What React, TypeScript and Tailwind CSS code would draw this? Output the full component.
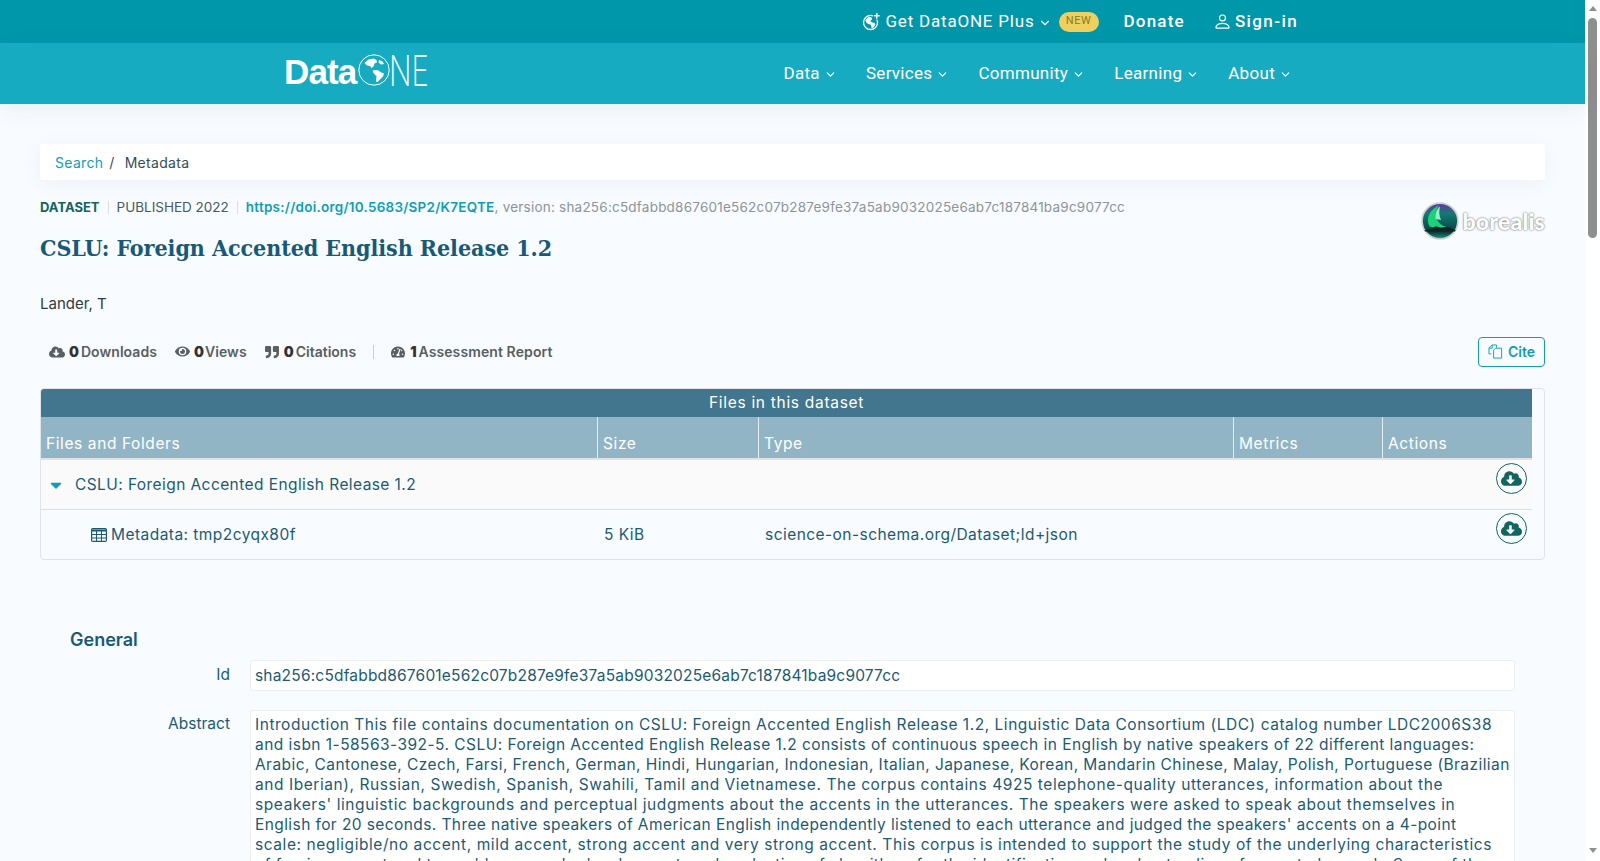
import { ChevronDown } from "lucide-react";
import { BsPerson } from "react-icons/bs";
import { FaCaretDown, FaCloudDownloadAlt, FaEye, FaQuoteRight, FaTachometerAlt } from "react-icons/fa";

const body = "font-['Inter','Liberation_Sans',sans-serif]";
const plex = "font-['Roboto','Liberation_Sans',sans-serif]";

const navItems = ["Data", "Services", "Community", "Learning", "About"];

const abstractLines = [
  { text: "Introduction This file contains documentation on CSLU: Foreign Accented English Release 1.2, Linguistic Data Consortium (LDC) catalog number LDC2006S38", cls: "tracking-[0.53px]" },
  { text: "and isbn 1-58563-392-5. CSLU: Foreign Accented English Release 1.2 consists of continuous speech in English by native speakers of 22 different languages:", cls: "tracking-[0.46px]" },
  { text: "Arabic, Cantonese, Czech, Farsi, French, German, Hindi, Hungarian, Indonesian, Italian, Japanese, Korean, Mandarin Chinese, Malay, Polish, Portuguese (Brazilian", cls: "tracking-[0.43px]" },
  { text: "and Iberian), Russian, Swedish, Spanish, Swahili, Tamil and Vietnamese. The corpus contains 4925 telephone-quality utterances, information about the", cls: "tracking-[0.56px]" },
  { text: "speakers' linguistic backgrounds and perceptual judgments about the accents in the utterances. The speakers were asked to speak about themselves in", cls: "tracking-[0.59px]" },
  { text: "English for 20 seconds. Three native speakers of American English independently listened to each utterance and judged the speakers' accents on a 4-point", cls: "tracking-[0.41px]" },
  { text: "scale: negligible/no accent, mild accent, strong accent and very strong accent. This corpus is intended to support the study of the underlying characteristics", cls: "tracking-[0.57px]" },
  { text: "of foreign accent and to enable research, development, and evaluation of algorithms for the identification and understanding of accented speech. Some of the", cls: "tracking-[0.47px]" },
];

const GlobePlus = () => (
  <svg viewBox="0 0 20 20" className="w-[19px] h-[19px]">
    <circle cx="9" cy="11" r="7.4" fill="none" stroke="#fff" strokeWidth="1.4" />
    <path d="M3.5 8.5L7 5l3 .5.5 2.5-2 1.5 2.5 1.5 2.5.5.5 2-2.5 3.5-1.5-.5-.5-3-3-1-2-1.5z" fill="#fff" />
    <rect x="11.5" y="0" width="8" height="8" fill="#0097aa" />
    <path d="M15.5 1v6M12.5 4h6" stroke="#fff" strokeWidth="1.6" />
  </svg>
);

const LogoGlobe = () => (
  <svg viewBox="0 0 32 32" className="w-[32px] h-[32px] shrink-0">
    <circle cx="16" cy="16" r="15.2" fill="none" stroke="#fff" strokeWidth="1" />
    <path d="M6.5 9l4-3.5 5-1 3 1.5.5 2.5-2.5 1-1 3-2 1.5-1.5-2-3-.5z" fill="#fff" />
    <path d="M14.5 16.5l5-.5 4 2.5 2.5 1-1 3-3 3-2.5 2.5-1.5-.5.5-5-3-3.5z" fill="#fff" />
    <path d="M21 6l3.5 1.5 1.5 2.5-3 .5-2.5-2z" fill="#fff" />
  </svg>
);

const BorealisMark = () => (
  <svg viewBox="0 0 36 36" className="w-[38px] h-[38px] shrink-0">
    <defs>
      <linearGradient id="sky" x1="0" y1="0" x2="0" y2="1">
        <stop offset="0" stopColor="#6a35a8" />
        <stop offset="0.3" stopColor="#127a70" />
        <stop offset="0.72" stopColor="#0c4a4c" />
        <stop offset="0.8" stopColor="#10302f" />
        <stop offset="1" stopColor="#0aa393" />
      </linearGradient>
    </defs>
    <circle cx="18" cy="18" r="17" fill="url(#sky)" stroke="#cfcfcf" strokeWidth="1.6" />
    <path d="M8 23C4 15 9 7 17 3c-3 5-5 10-1 15 2 3 5 5 9 6-6 1-13 1-17-1z" fill="#1fcf7c" />
    <path d="M14 16c-1-5 1-9 4-12-1 5-1 9 1 13z" fill="#8ff5c4" />
    <path d="M3 27l7-2 4-2 5 1.500 6-1 8 3-1 1.500H4z" fill="#0f2528" />
  </svg>
);

const CiteIcon = () => (
  <svg viewBox="0 0 16 16" className="w-[15px] h-[15px]" fill="none" stroke="#0e9fb5" strokeWidth="1">
    <path d="M3.500 10.500H1V4.500L4.500 1H9v3" />
    <path d="M1 4.500h3.500V1" />
    <path d="M6 6.500L8 4.500h6.500V15H6z" />
  </svg>
);

const TableIcon = () => (
  <svg viewBox="0 0 16 14" className="w-[16px] h-[14px] shrink-0" fill="none" stroke="#1c5a73">
    <rect x="0.6" y="0.6" width="14.8" height="12.8" rx="1.2" strokeWidth="1.2" />
    <path d="M1 2.500h14" strokeWidth="2.200" />
    <path d="M1 6.500h14M1 10h14M5.500 3v10M10.500 3v10" strokeWidth="1" />
  </svg>
);

const Scrollbar = () => (
  <div className="w-[15px] shrink-0 bg-white flex flex-col items-center justify-between pt-[6px] pb-[8px]">
    <div className="flex flex-col items-center gap-[7px]">
      <div className="w-0 h-0 border-x-[4.5px] border-x-transparent border-b-[5px] border-b-[#8f8f8f]" />
      <div className="w-[9px] h-[220px] rounded-full bg-[#8f8f8f]" />
    </div>
    <div className="w-0 h-0 border-x-[4.5px] border-x-transparent border-t-[5px] border-t-[#8f8f8f]" />
  </div>
);

const DownloadButton = () => (
  <div className="w-[31px] h-[31px] rounded-full border border-[#12655f] flex items-center justify-center">
    <FaCloudDownloadAlt className="w-[21px] h-[21px] text-[#12655f]" />
  </div>
);

const headCols = [
  { name: "Files and Folders", w: "w-[557px]" },
  { name: "Size", w: "w-[161px]" },
  { name: "Type", w: "w-[475px]" },
  { name: "Metrics", w: "w-[149px]" },
  { name: "Actions", w: "flex-1" },
];

export default function App() {
  return (
    <div className={`flex h-screen overflow-hidden ${body}`}>
      <div className="flex-1 min-w-0 bg-[#f8fbff] text-[#1c5a73]">
        <div className="h-[43px] bg-[#0097aa] flex items-center justify-end pr-[287px] text-white">
          <div className={`flex items-center text-[17px] tracking-[0.8px] ${plex}`}>
            <GlobePlus />
            <span className="ml-[4px]">Get DataONE Plus</span>
            <ChevronDown className="w-[14px] h-[14px] ml-[3px] mt-[2px]" strokeWidth={2} />
            <span className="ml-[7px] h-[20px] w-[40px] rounded-full bg-[#edd05f] text-[#8a7a1e] text-[11px] tracking-[0.6px] flex items-center justify-center">NEW</span>
            <span className="ml-[25px] font-medium tracking-[1.2px]">Donate</span>
            <BsPerson className="ml-[28px] w-[19px] h-[19px]" />
            <span className="ml-[3px] font-medium tracking-[1.4px]">Sign-in</span>
          </div>
        </div>
        <div className="relative h-[61px] bg-[#17abc1] shadow-[0_6px_24px_rgba(0,0,0,0.06)] flex items-center justify-between pl-[284px] pr-[293px] text-white">
          <div className="flex items-end h-[32px] w-[143px] -mt-[7px]">
            <span className="font-['Liberation_Sans',sans-serif] text-[35px] font-bold tracking-[-0.9px] leading-[32px] translate-y-[2px]">Data</span>
            <span className="ml-[2px]"><LogoGlobe /></span>
            <span className="font-['Inter',sans-serif] text-[42px] font-extralight leading-[32px] translate-y-[1px] origin-left scale-x-[0.7] whitespace-nowrap -ml-[1px]">NE</span>
          </div>
          <div className={`flex items-center gap-[29px] text-[17px] tracking-[0.3px] ${plex}`}>
            {navItems.map((item) => (
              <div key={item} className="flex items-center gap-[4px]">
                <span>{item}</span>
                <ChevronDown className="w-[13px] h-[13px] mt-[2px]" strokeWidth={2} />
              </div>
            ))}
          </div>
        </div>

        <div className="pl-[40px] pr-[40px]">
          <div className="mt-[40px] h-[36px] bg-white rounded-[3px] shadow-[0_4px_20px_rgba(30,60,90,0.05)] flex items-center px-[15px] text-[14px] tracking-[0.3px] text-[#334e57]">
            <span className="text-[#0e9fb5]">Search</span>
            <span className="ml-[6px] mr-[10px]">/</span>
            <span>Metadata</span>
          </div>

          <div className="relative">
            <div className="pt-[15px] h-[40px] flex items-center text-[13.5px] whitespace-nowrap">
              <span className="font-bold text-[13px] text-[#12655f]">DATASET</span>
              <span className="mx-[8px] h-[13px] w-px bg-[#d9dee2]" />
              <span className="text-[#455a64]">PUBLISHED 2022</span>
              <span className="mx-[8px] h-[13px] w-px bg-[#d9dee2]" />
              <span className="font-semibold tracking-[0.24px] text-[#0e9fb5]">https://doi.org/10.5683/SP2/K7EQTE</span>
              <span className="text-[#8d9499] tracking-[0.22px]">, version: sha256:c5dfabbd867601e562c07b287e9fe37a5ab9032025e6ab7c187841ba9c9077cc</span>
            </div>
            <h1 className="mt-[12px] font-['DejaVu_Serif_Condensed','DejaVu_Serif',serif] font-bold text-[23px] tracking-[-0.05px] leading-[32px] text-[#175a75]">CSLU: Foreign Accented English Release 1.2</h1>
            <div className="absolute right-0 top-[22px] flex items-center">
              <BorealisMark />
              <span className="ml-[3px] font-['Lato',sans-serif] font-black text-[23px] tracking-[0.2px] text-white [text-shadow:0_0_2px_#444]">borealis</span>
            </div>
          </div>

          <div className="mt-[30px] text-[15px] leading-[20px] text-[#2e3c42]">Lander, T</div>

          <div className="mt-[22px] flex items-center justify-between h-[31px]">
            <div className="flex items-center pl-[9px] text-[14px] font-semibold text-[#595f62] whitespace-nowrap">
              <FaCloudDownloadAlt className="w-[16px] h-[16px]" />
              <b className="ml-[4px] text-[#333]">0</b><span className="ml-[2px] tracking-[0.05px]">Downloads</span>
              <FaEye className="ml-[18px] w-[15px] h-[15px]" />
              <b className="ml-[4px] text-[#333]">0</b><span className="ml-[1px] tracking-[0.1px]">Views</span>
              <FaQuoteRight className="ml-[18px] w-[14px] h-[14px]" />
              <b className="ml-[5px] text-[#333]">0</b><span className="ml-[2px]">Citations</span>
              <span className="ml-[17px] mr-[17px] h-[14px] w-px bg-[#c9ced2]" />
              <FaTachometerAlt className="w-[14px] h-[14px]" />
              <b className="ml-[5px] text-[#333]">1</b><span className="ml-[2px] tracking-[0.1px]">Assessment Report</span>
            </div>
            <div className="h-[30px] w-[67px] rounded-[4px] border border-[#0e9fb5] text-[#0e9fb5] text-[14px] font-semibold flex items-center justify-center gap-[5px]">
              <CiteIcon />
              Cite
            </div>
          </div>

          <div className="mt-[21px] h-[172px] rounded-[4px] border border-[#e0e4e8] overflow-hidden pr-[12px] text-[15.5px] tracking-[0.45px]">
            <div className="h-[28px] bg-[#41768e] text-white tracking-[0.7px] flex items-center justify-center">Files in this dataset</div>
            <div className="h-[43px] bg-[#92b5c5] text-white tracking-[0.6px] flex border-b-[2px] border-[#dfe3e5]">
              {headCols.map((col, i) => (
                <div key={col.name} className={`${col.w} ${i < 4 ? "border-r border-[#e4ecef]" : ""} flex items-end pl-[5px] pb-[3px]`}>{col.name}</div>
              ))}
            </div>
            <div className="h-[50px] bg-[#fafafa] border-b border-[#dcdfe2] flex items-start justify-between">
              <div className="h-full flex items-center pl-[6px]">
                <FaCaretDown className="w-[18px] h-[18px] text-[#0e9fb5]" />
                <span className="ml-[10px] tracking-[0.42px]">CSLU: Foreign Accented English Release 1.2</span>
              </div>
              <div className="pt-[3px] pr-[5px]"><DownloadButton /></div>
            </div>
            <div className="h-[49px] flex items-start">
              <div className="w-[557px] h-full flex items-center pl-[50px]">
                <TableIcon />
                <span className="ml-[4px]">Metadata: tmp2cyqx80f</span>
              </div>
              <div className="w-[161px] h-full flex items-center pl-[6px]">5 KiB</div>
              <div className="flex-1 h-full flex items-center pl-[6px]">science-on-schema.org/Dataset;ld+json</div>
              <div className="pt-[3px] pr-[5px]"><DownloadButton /></div>
            </div>
          </div>

          <div className="mt-[68px] ml-[30px] text-[18px] leading-[24px] font-semibold text-[#175a75]">General</div>

          <div className="mt-[8px] flex items-start">
            <div className="w-[190px] text-right text-[15.5px] leading-[20px] pt-[5px]">Id</div>
            <div className="ml-[20px] flex-1 mr-[30px] h-[31px] bg-white border border-[#eceff1] rounded-[3px] flex items-center px-[4px] text-[15.5px] tracking-[0.19px]">sha256:c5dfabbd867601e562c07b287e9fe37a5ab9032025e6ab7c187841ba9c9077cc</div>
          </div>

          <div className="mt-[19px] flex items-start">
            <div className="w-[190px] text-right text-[15.5px] leading-[20px] pt-[4px]">Abstract</div>
            <div className="ml-[20px] flex-1 mr-[30px] bg-white border border-[#eceff1] rounded-[3px] px-[4px] pt-[4px] text-[15.5px] leading-[20px] whitespace-nowrap overflow-hidden">
              {abstractLines.map((line) => (
                <div key={line.text} className={line.cls}>{line.text}</div>
              ))}
            </div>
          </div>
        </div>
      </div>
      <Scrollbar />
    </div>
  );
}
